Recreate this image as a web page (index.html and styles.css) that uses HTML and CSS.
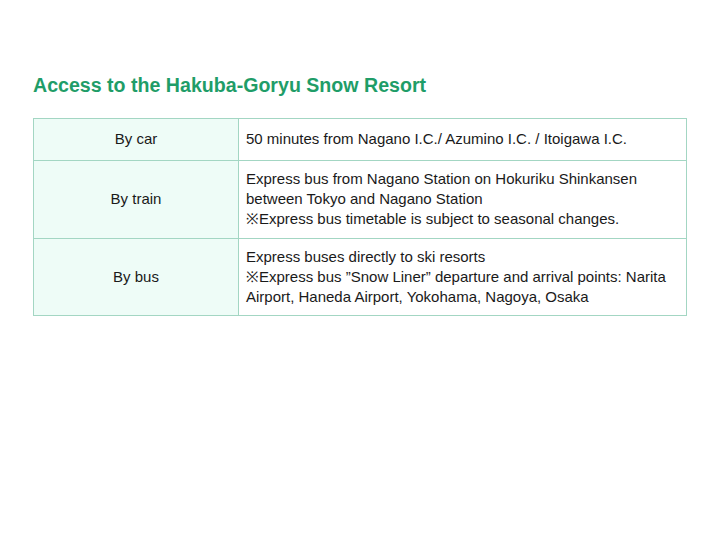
FILE: index.html
```html
<!DOCTYPE html>
<html>
<head>
<meta charset="utf-8">
<link rel="stylesheet" href="styles.css">
</head>
<body>
<div class="page">
  <h1 class="title">Access to the Hakuba-Goryu Snow Resort</h1>
  <table class="access">
    <tr class="row-short">
      <th>By car</th>
      <td>50 minutes from Nagano I.C./ Azumino I.C. / Itoigawa I.C.</td>
    </tr>
    <tr>
      <th>By train</th>
      <td>Express bus from Nagano Station on Hokuriku Shinkansen<br>between Tokyo and Nagano Station<br>※Express bus timetable is subject to seasonal changes.</td>
    </tr>
    <tr class="row-last">
      <th>By bus</th>
      <td>Express buses directly to ski resorts<br>※Express bus ”Snow Liner” departure and arrival points: Narita<br>Airport, Haneda Airport, Yokohama, Nagoya, Osaka</td>
    </tr>
  </table>
</div>
</body>
</html>
```
FILE: styles.css
```css
html, body {
  margin: 0;
  padding: 0;
  background: #ffffff;
}
.page {
  padding: 74px 33px 0 33px;
  font-family: "Liberation Sans", Arial, sans-serif;
}
.title {
  margin: 0 0 21px 0;
  font-size: 19.6px;
  line-height: 23px;
  font-weight: bold;
  color: #1f9d68;
}
.access {
  width: 654px;
  border-collapse: collapse;
  font-size: 15px;
  line-height: 20px;
  color: #1a1a1a;
}
.access th, .access td {
  border: 1px solid #a3d6c3;
  padding: 8px 7px 9px 7px;
  vertical-align: middle;
  text-align: left;
}
.access th {
  width: 190px;
  background: #eefcf7;
  font-weight: normal;
  text-align: center;
}
.row-short th, .row-short td {
  height: 24px;
}
.row-last th, .row-last td {
  padding-bottom: 8px;
}
```
